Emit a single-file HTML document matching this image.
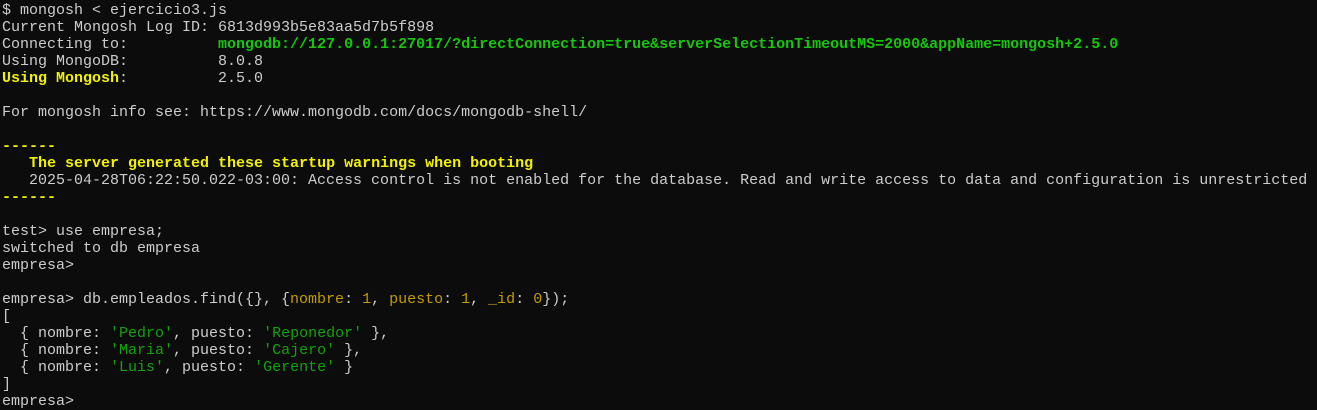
<!DOCTYPE html><html><head><style>
body{margin:0;background:#0c0c0c;width:1317px;height:409px;overflow:hidden}
pre{margin:0;padding:2px 0 0 2px;font-family:"Liberation Mono",monospace;font-size:15px;line-height:17px;color:#cccccc}
.g{color:#16c60c;font-weight:bold}.s{color:#13a10e}.y{color:#f1f100;font-weight:bold}.k{color:#c19c00}
</style></head><body><pre>$ mongosh &lt; ejercicio3.js
Current Mongosh Log ID: 6813d993b5e83aa5d7b5f898
Connecting to:          <span class="g">mongodb://127.0.0.1:27017/?directConnection=true&amp;serverSelectionTimeoutMS=2000&amp;appName=mongosh+2.5.0</span>
Using MongoDB:          8.0.8
<span class="y">Using Mongosh</span>:          2.5.0

For mongosh info see: https://www.mongodb.com/docs/mongodb-shell/

<span class="y">------</span>
   <span class="y">The server generated these startup warnings when booting</span>
   2025-04-28T06:22:50.022-03:00: Access control is not enabled for the database. Read and write access to data and configuration is unrestricted
<span class="y">------</span>

test&gt; use empresa;
switched to db empresa
empresa&gt;

empresa&gt; db.empleados.find({}, {<span class="k">nombre</span>: <span class="k">1</span>, <span class="k">puesto</span>: <span class="k">1</span>, <span class="k">_id</span>: <span class="k">0</span>});
[
  { nombre: <span class="s">'Pedro'</span>, puesto: <span class="s">'Reponedor'</span> },
  { nombre: <span class="s">'Maria'</span>, puesto: <span class="s">'Cajero'</span> },
  { nombre: <span class="s">'Luis'</span>, puesto: <span class="s">'Gerente'</span> }
]
empresa&gt;</pre></body></html>
